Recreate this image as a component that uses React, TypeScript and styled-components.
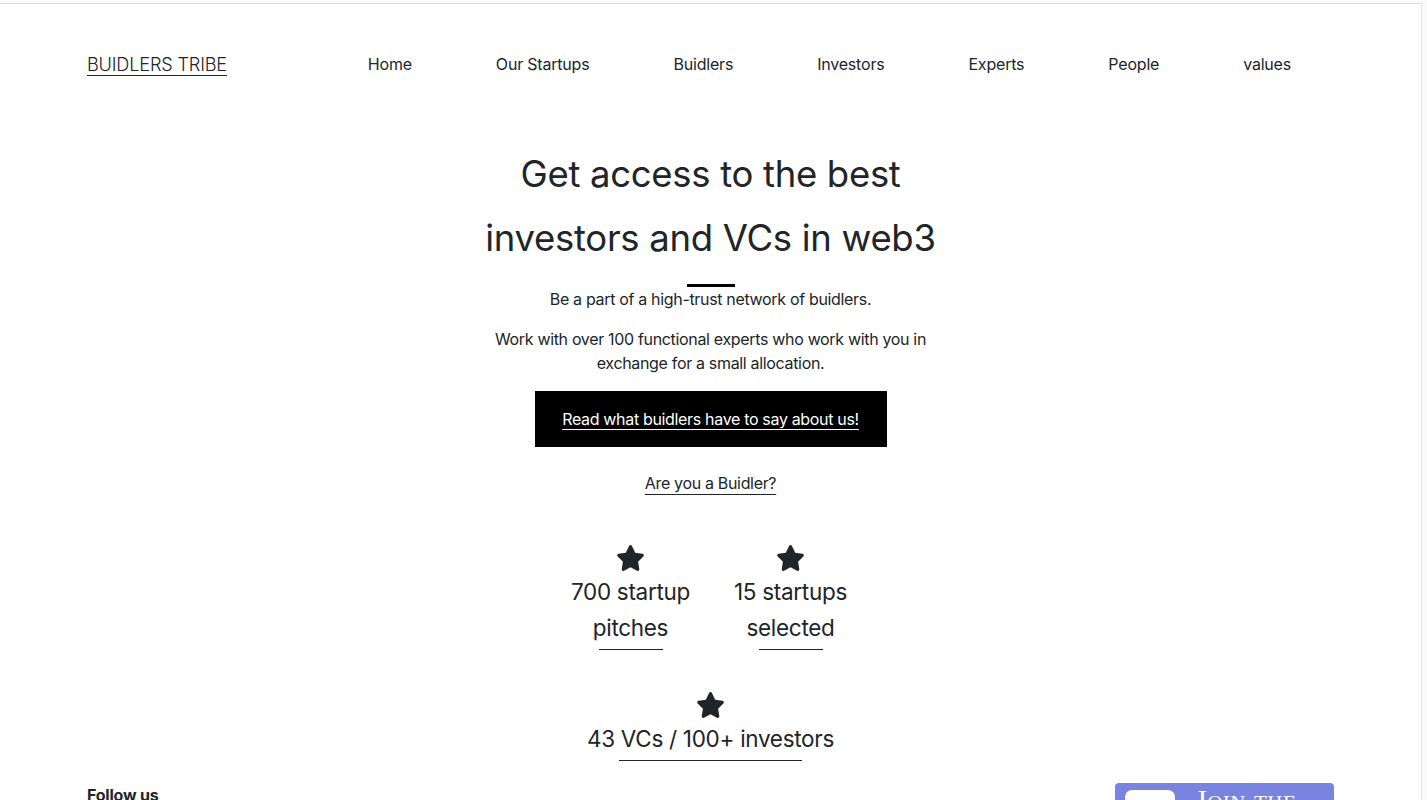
import React from "react";
import styled, { createGlobalStyle } from "styled-components";
import { FaStar } from "react-icons/fa6";

const GlobalStyle = createGlobalStyle`
  html, body { margin: 0; padding: 0; background: #fafafa; }
  body {
    font-family: Inter, "Noto Sans", Arial, sans-serif;
    color: #212529;
    overflow: hidden;
  }
  * { box-sizing: border-box; }
`;

const Frame = styled.div`
  width: 1422px;
  height: 797px;
  margin-top: 3px;
  background: #fff;
  border-top: 1px solid #dcdcdc;
  border-right: 1px solid #e6e6e6;
  overflow: hidden;
  display: flex;
  flex-direction: column;
`;

const Header = styled.header`
  display: flex;
  align-items: center;
  height: 40px;
  margin-top: 49px;
  padding: 0 87px;
`;

const Logo = styled.a`
  font-size: 18.2px;
  font-weight: 300;
  color: #212529;
  text-decoration: underline;
  text-underline-offset: 4px;
  text-decoration-thickness: 1px;
  letter-spacing: -0.2px;
`;

const NavList = styled.nav`
  margin-left: auto;
  display: flex;
  align-items: center;
`;

const NavLink = styled.a`
  font-size: 16px;
  letter-spacing: -0.2px;
  color: #212529;
  text-decoration: none;
  padding: 0 42px;
  &:last-child { padding-right: 43px; }
`;

const Hero = styled.main`
  display: flex;
  flex-direction: column;
  align-items: center;
  text-align: center;
`;

const Title = styled.h1`
  margin: 67px 0 0;
  font-size: 36.5px;
  font-weight: 400;
  line-height: 64px;
  letter-spacing: -0.3px;
  max-width: 470px;
`;

const Bar = styled.div`
  width: 48px;
  height: 3px;
  background: #000;
  margin-top: 14px;
`;

const Text = styled.p<{ $gap?: number; $width?: number }>`
  margin: ${(p) => p.$gap ?? 0}px 0 0;
  font-size: 16px;
  line-height: 24px;
  letter-spacing: -0.33px;
  max-width: ${(p) => (p.$width ? `${p.$width}px` : "none")};
`;

const CtaButton = styled.a`
  margin-top: 16px;
  width: 352px;
  height: 56px;
  background: #000;
  color: #fff;
  display: flex;
  align-items: center;
  justify-content: center;
  font-size: 16px;
  letter-spacing: -0.33px;
  text-decoration: underline;
  text-underline-offset: 4px;
`;

const TextLink = styled.a`
  margin-top: 24px;
  font-size: 16px;
  line-height: 24px;
  letter-spacing: -0.33px;
  color: #212529;
  text-decoration: underline;
  text-underline-offset: 5px;
`;

const Stats = styled.div`
  margin-top: 49px;
  width: 340px;
  display: flex;
  flex-wrap: wrap;
  justify-content: center;
  row-gap: 41px;
`;

const StatItem = styled.div<{ $width: number }>`
  width: ${(p) => p.$width}px;
  display: flex;
  flex-direction: column;
  align-items: center;
`;

const StarIcon = styled(FaStar)`
  width: 29px;
  height: 28px;
  color: #212529;
  margin-bottom: 2px;
`;

const StatLabel = styled.div`
  font-size: 22.5px;
  line-height: 36px;
  letter-spacing: -0.3px;
  padding: 0 14px;
`;

const Rule = styled.div<{ $width: number }>`
  width: ${(p) => p.$width}px;
  height: 1px;
  background: #212529;
  margin-top: 3px;
`;

const Footer = styled.footer`
  margin-top: 22px;
  display: flex;
  justify-content: space-between;
  align-items: flex-start;
  padding: 0 87px;
`;

const FollowTitle = styled.h5`
  margin: 0;
  font-size: 16px;
  font-weight: 700;
  line-height: 24px;
  letter-spacing: -0.2px;
`;

const Discord = styled.a`
  width: 219px;
  height: 60px;
  background: #7983e0;
  border-radius: 4px;
  display: flex;
  align-items: flex-start;
  padding: 7px 10px;
  gap: 20px;
  text-decoration: none;
`;

const DiscordBox = styled.span`
  width: 50px;
  height: 40px;
  background: #fff;
  border-radius: 7px;
`;

const DiscordText = styled.span`
  font-family: "Liberation Serif", "DejaVu Serif", serif;
  font-variant: small-caps;
  font-size: 30px;
  line-height: 30px;
  color: #fff;
  letter-spacing: 0.5px;
  white-space: nowrap;
  margin-top: -5px;
`;

const navItems = ["Home", "Our Startups", "Buidlers", "Investors", "Experts", "People", "values"];

export default function App() {
  return (
    <>
      <GlobalStyle />
      <Frame>
        <Header>
          <Logo href="#">BUIDLERS TRIBE</Logo>
          <NavList>
            {navItems.map((n) => (
              <NavLink key={n} href="#">{n}</NavLink>
            ))}
          </NavList>
        </Header>
        <Hero>
          <Title>Get access to the best investors and VCs in web3</Title>
          <Bar />
          <Text>Be a part of a high-trust network of buidlers.</Text>
          <Text $gap={16} $width={450}>
            Work with over 100 functional experts who work with you in exchange for a small allocation.
          </Text>
          <CtaButton href="#">Read what buidlers have to say about us!</CtaButton>
          <TextLink href="#">Are you a Buidler?</TextLink>
          <Stats>
            <StatItem $width={160}>
              <StarIcon />
              <StatLabel>700 startup pitches</StatLabel>
              <Rule $width={64} />
            </StatItem>
            <StatItem $width={160}>
              <StarIcon />
              <StatLabel>15 startups selected</StatLabel>
              <Rule $width={64} />
            </StatItem>
            <StatItem $width={320}>
              <StarIcon />
              <StatLabel>43 VCs / 100+ investors</StatLabel>
              <Rule $width={183} />
            </StatItem>
          </Stats>
        </Hero>
        <Footer>
          <FollowTitle>Follow us</FollowTitle>
          <Discord href="#">
            <DiscordBox />
            <DiscordText>Join the</DiscordText>
          </Discord>
        </Footer>
      </Frame>
    </>
  );
}
